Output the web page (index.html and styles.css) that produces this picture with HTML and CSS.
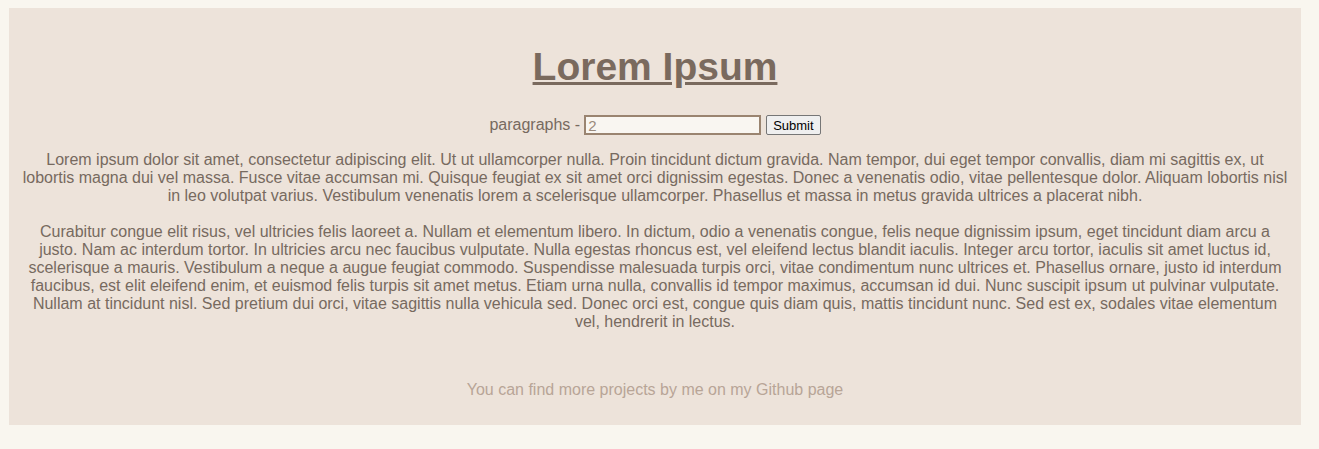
FILE: index.html
```html
<!DOCTYPE html>
<html lang="en">
<head>
<meta charset="utf-8">
<title>Lorem Ipsum</title>
<link rel="stylesheet" href="styles.css">
</head>
<body>
<div class="page">
  <h1 class="title"><a href="#" class="title-link">Lorem Ipsum</a></h1>
  <form class="controls">
    <label class="controls-label" for="count">paragraphs - </label>
    <input class="controls-input" id="count" type="text" placeholder="2">
    <button class="controls-button" type="button">Submit</button>
  </form>
  <div class="text">
    <p class="para">Lorem ipsum dolor sit amet, consectetur adipiscing elit. Ut ut ullamcorper nulla. Proin tincidunt dictum gravida. Nam tempor, dui eget tempor convallis, diam mi sagittis ex, ut lobortis magna dui vel massa. Fusce vitae accumsan mi. Quisque feugiat ex sit amet orci dignissim egestas. Donec a venenatis odio, vitae pellentesque dolor. Aliquam lobortis nisl in leo volutpat varius. Vestibulum venenatis lorem a scelerisque ullamcorper. Phasellus et massa in metus gravida ultrices a placerat nibh.</p>
    <p class="para">Curabitur congue elit risus, vel ultricies felis laoreet a. Nullam et elementum libero. In dictum, odio a venenatis congue, felis neque dignissim ipsum, eget tincidunt diam arcu a justo. Nam ac interdum tortor. In ultricies arcu nec faucibus vulputate. Nulla egestas rhoncus est, vel eleifend lectus blandit iaculis. Integer arcu tortor, iaculis sit amet luctus id, scelerisque a mauris. Vestibulum a neque a augue feugiat commodo. Suspendisse malesuada turpis orci, vitae condimentum nunc ultrices et. Phasellus ornare, justo id interdum faucibus, est elit eleifend enim, et euismod felis turpis sit amet metus. Etiam urna nulla, convallis id tempor maximus, accumsan id dui. Nunc suscipit ipsum ut pulvinar vulputate. Nullam at tincidunt nisl. Sed pretium dui orci, vitae sagittis nulla vehicula sed. Donec orci est, congue quis diam quis, mattis tincidunt nunc. Sed est ex, sodales vitae elementum vel, hendrerit in lectus.</p>
  </div>
  <footer class="footer">You can find more projects by me on my Github page</footer>
</div>
</body>
</html>
```

FILE: styles.css
```css
html, body {
  margin: 0;
  padding: 0;
}
body {
  background: #f9f6ef;
  padding: 8px 18px 24px 9px;
  font-family: "Liberation Sans", Arial, sans-serif;
  font-size: 16px;
  color: #776a5f;
}
.page {
  background: #ede3da;
  padding: 36px 12px 26px 12px;
  text-align: center;
}
.title {
  margin: 0;
  font-size: 39px;
  line-height: 45px;
  font-weight: bold;
}
.title-link {
  color: #7a6a5e;
  text-decoration: underline;
}
.controls {
  margin-top: 25px;
  display: flex;
  justify-content: center;
  align-items: center;
  height: 22px;
}
.controls-label {
  color: #776a5f;
  margin-right: 4px;
}
.controls-input {
  box-sizing: border-box;
  width: 177px;
  height: 20px;
  border: 2px solid #9a8470;
  background: #f9f6f1;
  padding: 0 2px;
  font-family: "Liberation Sans", Arial, sans-serif;
  font-size: 15px;
  color: #776a5f;
}
.controls-input::placeholder {
  color: #9a8a7c;
}
.controls-button {
  margin-left: 5px;
  height: 20px;
  padding: 0 6px;
  font-family: "Liberation Sans", Arial, sans-serif;
  font-size: 13px;
  color: #000;
  background: #efefef;
  border: 1px solid #767676;
  border-radius: 2px;
}
.text {
  margin-top: 15px;
}
.para {
  margin: 0 0 18px 0;
  line-height: 18px;
}
.para:last-child {
  margin-bottom: 0;
}
.footer {
  margin-top: 50px;
  line-height: 18px;
  color: #b8a597;
}
```
